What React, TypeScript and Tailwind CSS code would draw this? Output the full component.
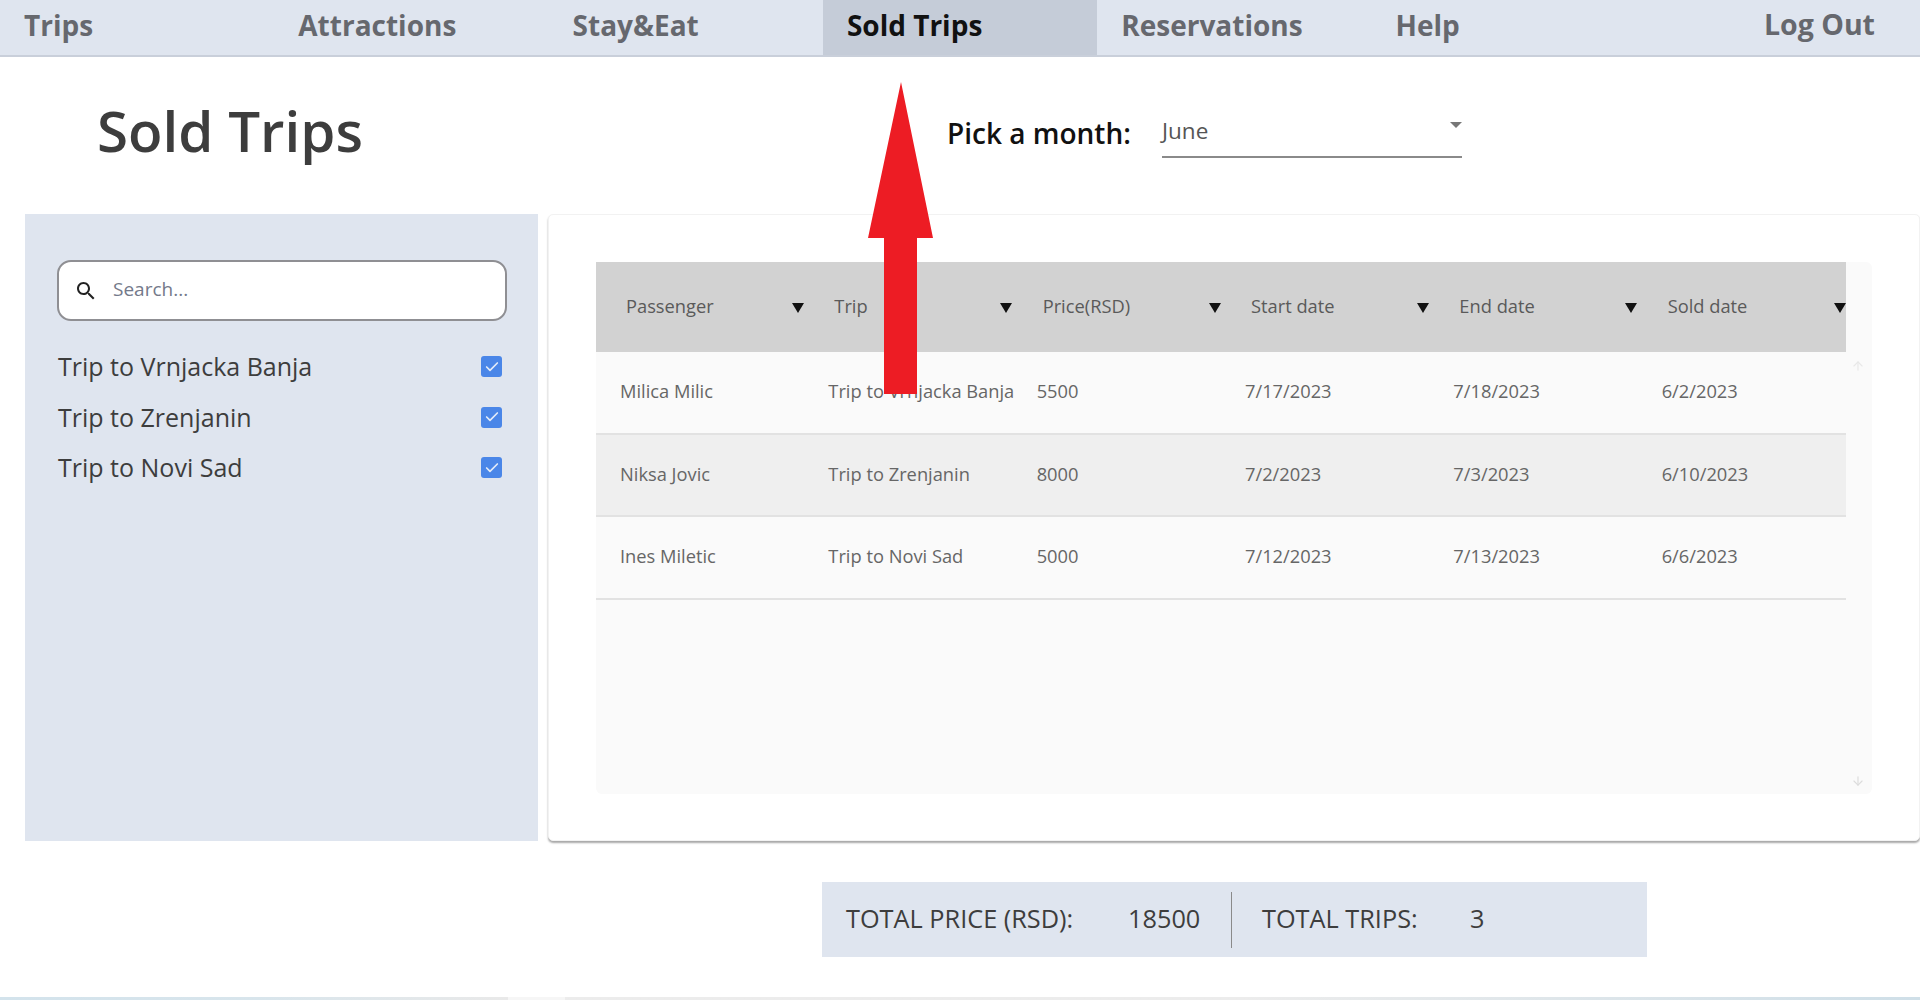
import React from "react";
import { ArrowUp, ArrowDown, Check } from "lucide-react";

const tabs = ["Trips", "Attractions", "Stay&Eat", "Sold Trips", "Reservations", "Help"];
const columns = ["Passenger", "Trip", "Price(RSD)", "Start date", "End date", "Sold date"];
const rows = [
  ["Milica Milic", "Trip to Vrnjacka Banja", "5500", "7/17/2023", "7/18/2023", "6/2/2023"],
  ["Niksa Jovic", "Trip to Zrenjanin", "8000", "7/2/2023", "7/3/2023", "6/10/2023"],
  ["Ines Miletic", "Trip to Novi Sad", "5000", "7/12/2023", "7/13/2023", "6/6/2023"],
];
const trips = ["Trip to Vrnjacka Banja", "Trip to Zrenjanin", "Trip to Novi Sad"];

export default function App() {
  return (
    <div className="relative h-[1000px] w-[1920px] overflow-hidden bg-white font-['Open_Sans',sans-serif] text-[#3d3d3d]">
      {/* Nav */}
      <nav className="flex h-[57px] border-b-2 border-[#c9cfda] bg-[#dfe5ef]">
        {tabs.map((tab) => (
          <div
            key={tab}
            className={
              tab === "Sold Trips"
                ? "flex h-[55px] w-[274.3px] items-center bg-[#c5ccd8] px-6 pb-[6px] text-[28px] font-bold text-[#111]"
                : "flex h-[55px] w-[274.3px] items-center px-6 pb-[6px] text-[28px] font-bold text-[#66686e]"
            }
          >
            {tab}
          </div>
        ))}
        <div className="ml-auto mr-[45px] flex h-[55px] items-center pb-[6px] text-[28.5px] font-bold text-[#66686e]">Log Out</div>
      </nav>

      {/* Title row */}
      <div className="flex h-[157px] items-start">
        <h1 className="ml-[97px] mt-[31px] w-[850px] text-[56.5px] font-semibold leading-[86px] text-[#3d3d3d]">Sold Trips</h1>
        <div className="mt-[54px] flex">
          <div className="w-[215px] text-[28px] font-semibold leading-[44px] text-[#111]">Pick a month:</div>
          <div className="relative h-[47px] w-[300px] border-b-2 border-[#8a8a8a] text-[22.5px] leading-[40px] text-[#555]">
            June
            <span className="absolute right-0 top-[11px] h-0 w-0 border-x-[6px] border-t-[6px] border-x-transparent border-t-[#777]"></span>
          </div>
        </div>
      </div>

      {/* Main */}
      <div className="flex h-[627px] pl-[25px]">
        <aside className="h-[627px] w-[513px] bg-[#dfe5ef] pl-[32px] pr-[31px] pt-[46px]">
          <div className="flex h-[61px] items-center rounded-[14px] border-2 border-[#8f8f93] bg-white pl-[15px] text-[#74798a]">
            <svg width="24" height="24" viewBox="0 0 24 24" fill="#222">
              <path d="M15.5 14h-.79l-.28-.27C15.41 12.59 16 11.11 16 9.5 16 5.91 13.09 3 9.5 3S3 5.91 3 9.5 5.91 16 9.5 16c1.61 0 3.09-.59 4.23-1.57l.27.28v.79l5 4.99L20.49 19l-4.99-5zm-6 0C7.01 14 5 11.99 5 9.5S7.01 5 9.5 5 14 7.01 14 9.5 11.99 14 9.5 14z" />
            </svg>
            <span className="ml-[15px] pb-[2px] text-[19px]">Search...</span>
          </div>
          <div className="mt-[21px] flex flex-col">
            {trips.map((trip) => (
              <div key={trip} className="flex h-[50.5px] items-center justify-between pb-[1px] pl-[1px] pr-[5px] text-[25px] text-[#3d3d3d]">
                {trip}
                <span className="flex h-[21px] w-[21px] items-center justify-center rounded-[3px] bg-[#4a86e8]">
                  <Check size={16} strokeWidth={2.5} className="text-[#e3ebf8]" />
                </span>
              </div>
            ))}
          </div>
        </aside>

        <section className="ml-[10px] flex-1 rounded-[5px] border border-[#f2f2f2] bg-white pl-[47px] pr-[47px] pt-[47px] shadow-[0_2px_2px_#a8a8a8]">
          <div className="relative h-[532px] rounded-[6px] bg-[#fafafa] pr-[26px]">
            <div className="grid h-[90px] grid-cols-6 overflow-hidden bg-[#d2d2d2] pb-[2px] text-[18.3px] text-[#5a5a5a]">
              {columns.map((col) => (
                <div key={col} className="relative flex items-center pl-[30px]">
                  {col}
                  <span className="absolute left-[196px] top-[41px] h-0 w-0 border-x-[6px] border-t-[10px] border-x-transparent border-t-[#111]"></span>
                </div>
              ))}
            </div>
            {rows.map((row, i) => (
              <div
                key={row[0]}
                className={
                  i === 1
                    ? "grid h-[82.5px] grid-cols-6 items-center border-b-2 border-[#e2e2e2] bg-[#efefef] pb-[3px] text-[18.3px] text-[#666]"
                    : "grid h-[82.5px] grid-cols-6 items-center border-b-2 border-[#e2e2e2] pb-[3px] text-[18.3px] text-[#666]"
                }
              >
                {row.map((cell) => (
                  <div key={cell} className="whitespace-nowrap pl-[24px]">
                    {cell}
                  </div>
                ))}
              </div>
            ))}
            <ArrowUp size={14} className="absolute right-[7px] top-[97px] text-[#e8e8e8]" />
            <ArrowDown size={14} className="absolute right-[7px] bottom-[6px] text-[#dcdcdc]" />
          </div>
        </section>
      </div>

      {/* Totals */}
      <div className="ml-[822px] mt-[41px] flex h-[75px] w-[825px] items-center bg-[#dfe5ef] pl-[24px] text-[25.3px] text-[#3d3d3d]">
        <span className="w-[282px] pb-[2px]">TOTAL PRICE (RSD):</span>
        <span className="w-[103px] pb-[2px]">18500</span>
        <span className="h-[56px] w-px bg-[#8a8a8a]"></span>
        <span className="ml-[30px] w-[208px] pb-[2px]">TOTAL TRIPS:</span>
        <span className="pb-[2px]">3</span>
      </div>

      {/* Bottom strip */}
      <div className="absolute bottom-0 left-0 flex h-[3px] w-full">
        <div className="h-full w-[508px] bg-gradient-to-r from-[#d3e3ec] via-[#d8e5ec] to-[#e9e9e9]"></div>
        <div className="h-full w-[57px] bg-[#f6f6f6]"></div>
        <div className="h-full flex-1 bg-gradient-to-r from-[#ececec] via-[#ececec] to-[#cfdfe8]"></div>
      </div>

      {/* Red annotation arrow */}
      <svg className="absolute left-[868px] top-[82px]" width="66" height="312" viewBox="0 0 66 312">
        <path d="M33 0 L65 156 L49 156 L49 312 L16 312 L16 156 L0 156 Z" fill="#ed1c24" />
      </svg>
    </div>
  );
}
